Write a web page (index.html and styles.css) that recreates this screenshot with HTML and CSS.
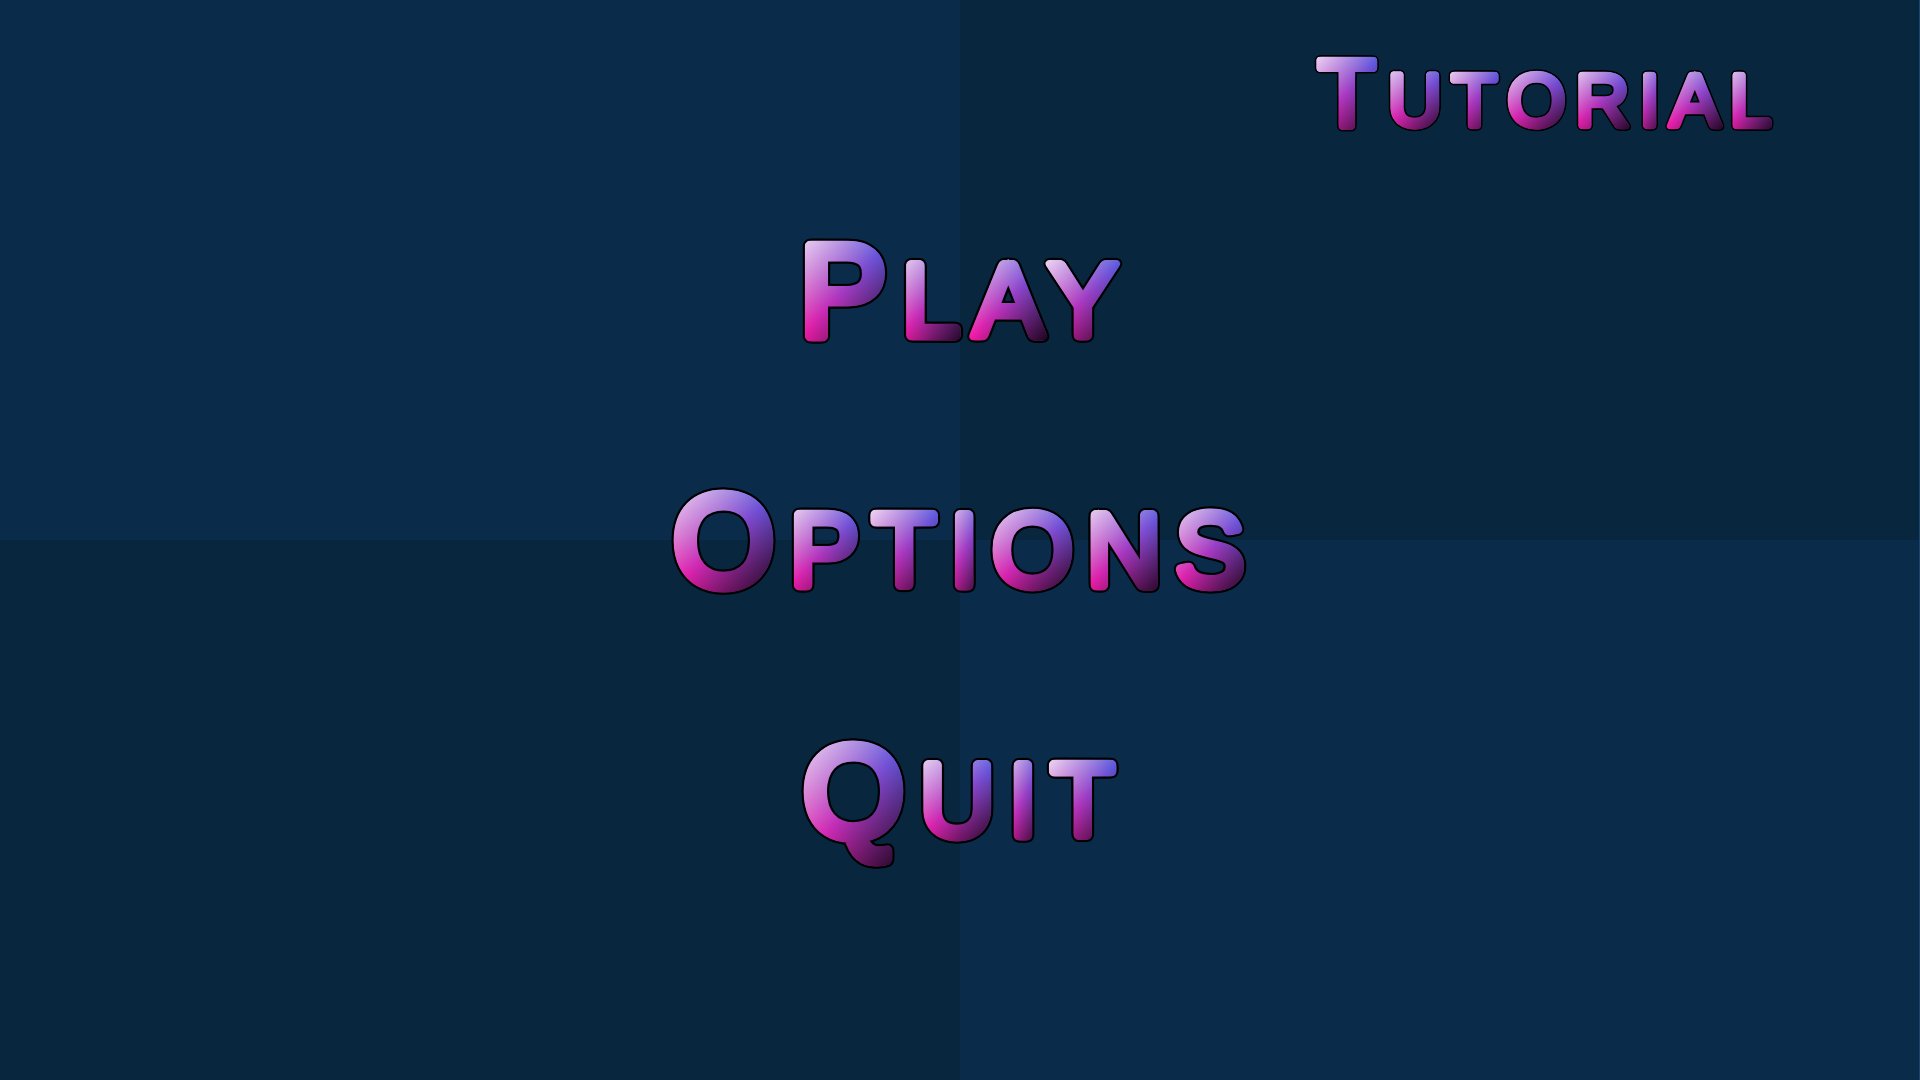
FILE: index.html
```html
<!DOCTYPE html>
<html lang="en">
<head>
    <meta charset="UTF-8">
    <meta name="viewport" content="width=device-width, initial-scale=1.0">
    <title>Main Menu</title>
    <link rel="stylesheet" href="styles.css">
</head>
<body>
    <!-- rounds the letter corners and puts a black outline behind them -->
    <svg class="filters" width="0" height="0" aria-hidden="true">
        <filter id="outline" x="-5%" y="-20%" width="110%" height="160%" color-interpolation-filters="sRGB">
            <feGaussianBlur in="SourceAlpha" stdDeviation="3.5" />
            <feComponentTransfer result="shape">
                <feFuncA type="linear" slope="10" intercept="-4" />
            </feComponentTransfer>
            <feComposite in="SourceGraphic" in2="shape" operator="in" result="fill" />
            <feGaussianBlur in="fill" stdDeviation="1.6" />
            <feComponentTransfer result="edge">
                <feFuncR type="linear" slope="0" />
                <feFuncG type="linear" slope="0" />
                <feFuncB type="linear" slope="0" />
                <feFuncA type="linear" slope="11" intercept="-0.3" />
            </feComponentTransfer>
            <feMerge>
                <feMergeNode in="edge" />
                <feMergeNode in="fill" />
            </feMerge>
        </filter>
        <filter id="outline-small" x="-5%" y="-20%" width="110%" height="160%" color-interpolation-filters="sRGB">
            <feGaussianBlur in="SourceAlpha" stdDeviation="2.5" />
            <feComponentTransfer result="shape">
                <feFuncA type="linear" slope="10" intercept="-4" />
            </feComponentTransfer>
            <feComposite in="SourceGraphic" in2="shape" operator="in" result="fill" />
            <feGaussianBlur in="fill" stdDeviation="1.2" />
            <feComponentTransfer result="edge">
                <feFuncR type="linear" slope="0" />
                <feFuncG type="linear" slope="0" />
                <feFuncB type="linear" slope="0" />
                <feFuncA type="linear" slope="9" intercept="-0.3" />
            </feComponentTransfer>
            <feMerge>
                <feMergeNode in="edge" />
                <feMergeNode in="fill" />
            </feMerge>
        </filter>
    </svg>

    <header class="top-bar">
        <button class="menu-button small" aria-label="Tutorial"><span class="cap">T</span><span>u</span><span>t</span><span>o</span><span>r</span><span>i</span><span>a</span><span>l</span></button>
    </header>

    <nav class="menu">
        <button class="menu-button" aria-label="Play"><span class="cap">P</span><span>l</span><span>a</span><span class="kern">y</span></button>
        <button class="menu-button" aria-label="Options"><span class="cap">O</span><span>p</span><span>t</span><span>i</span><span>o</span><span>n</span><span>s</span></button>
        <button class="menu-button" aria-label="Quit"><span class="cap tail">Q</span><span>u</span><span>i</span><span>t</span></button>
    </nav>
</body>
</html>
```

FILE: styles.css
```css
* {
    box-sizing: border-box;
}

body {
    margin: 0;
    min-height: 100vh;
    font-family: 'Liberation Sans', Arial, sans-serif;
    background: conic-gradient(#08263e 25%, #0a2b4a 0 50%, #08263e 0 75%, #0a2b4a 0);
    border-right: 1px solid #1d4470;
}

.filters {
    position: absolute;
}

.top-bar {
    display: flex;
    justify-content: flex-end;
    padding: 54px 146px 0 0;
}

.menu {
    display: flex;
    flex-direction: column;
    align-items: center;
    gap: 150px;
    padding-top: 108px;
}

.menu-button {
    display: flex;
    align-items: baseline;
    height: 100px;
    padding: 0 4px 0 0;
    border: none;
    background: none;
    font-family: inherit;
    font-size: 104px;
    text-transform: uppercase;
    cursor: pointer;
    filter: url(#outline);
}

.menu-button.small {
    height: 75px;
    padding: 0;
    font-size: 75px;
    filter: url(#outline-small);
}

/* every letter carries its own four corner gradient */
.menu-button span {
    padding: 2px 8px;
    margin-right: calc(0.13em - 16px);
    line-height: 0.8;
    color: transparent;
    -webkit-text-stroke: 0.085em transparent;
    background:
        linear-gradient(to bottom right, #f4e8f8, #f4e8f800 50%, #10001000 50%, #100010),
        linear-gradient(to top right, #f818a4 5%, #6058dc 88%);
    -webkit-background-clip: text;
    background-clip: text;
}

.menu-button .cap {
    margin-right: calc(0.12em - 16px);
    font-size: 1.25em;
}

.menu-button.small .cap {
    margin-right: calc(0.13em - 16px);
}

.menu-button .tail {
    padding-bottom: 0.2em;
}

.menu-button .kern {
    margin-left: -8px;
}

.menu-button:hover {
    transform: scale(1.05);
}
```
